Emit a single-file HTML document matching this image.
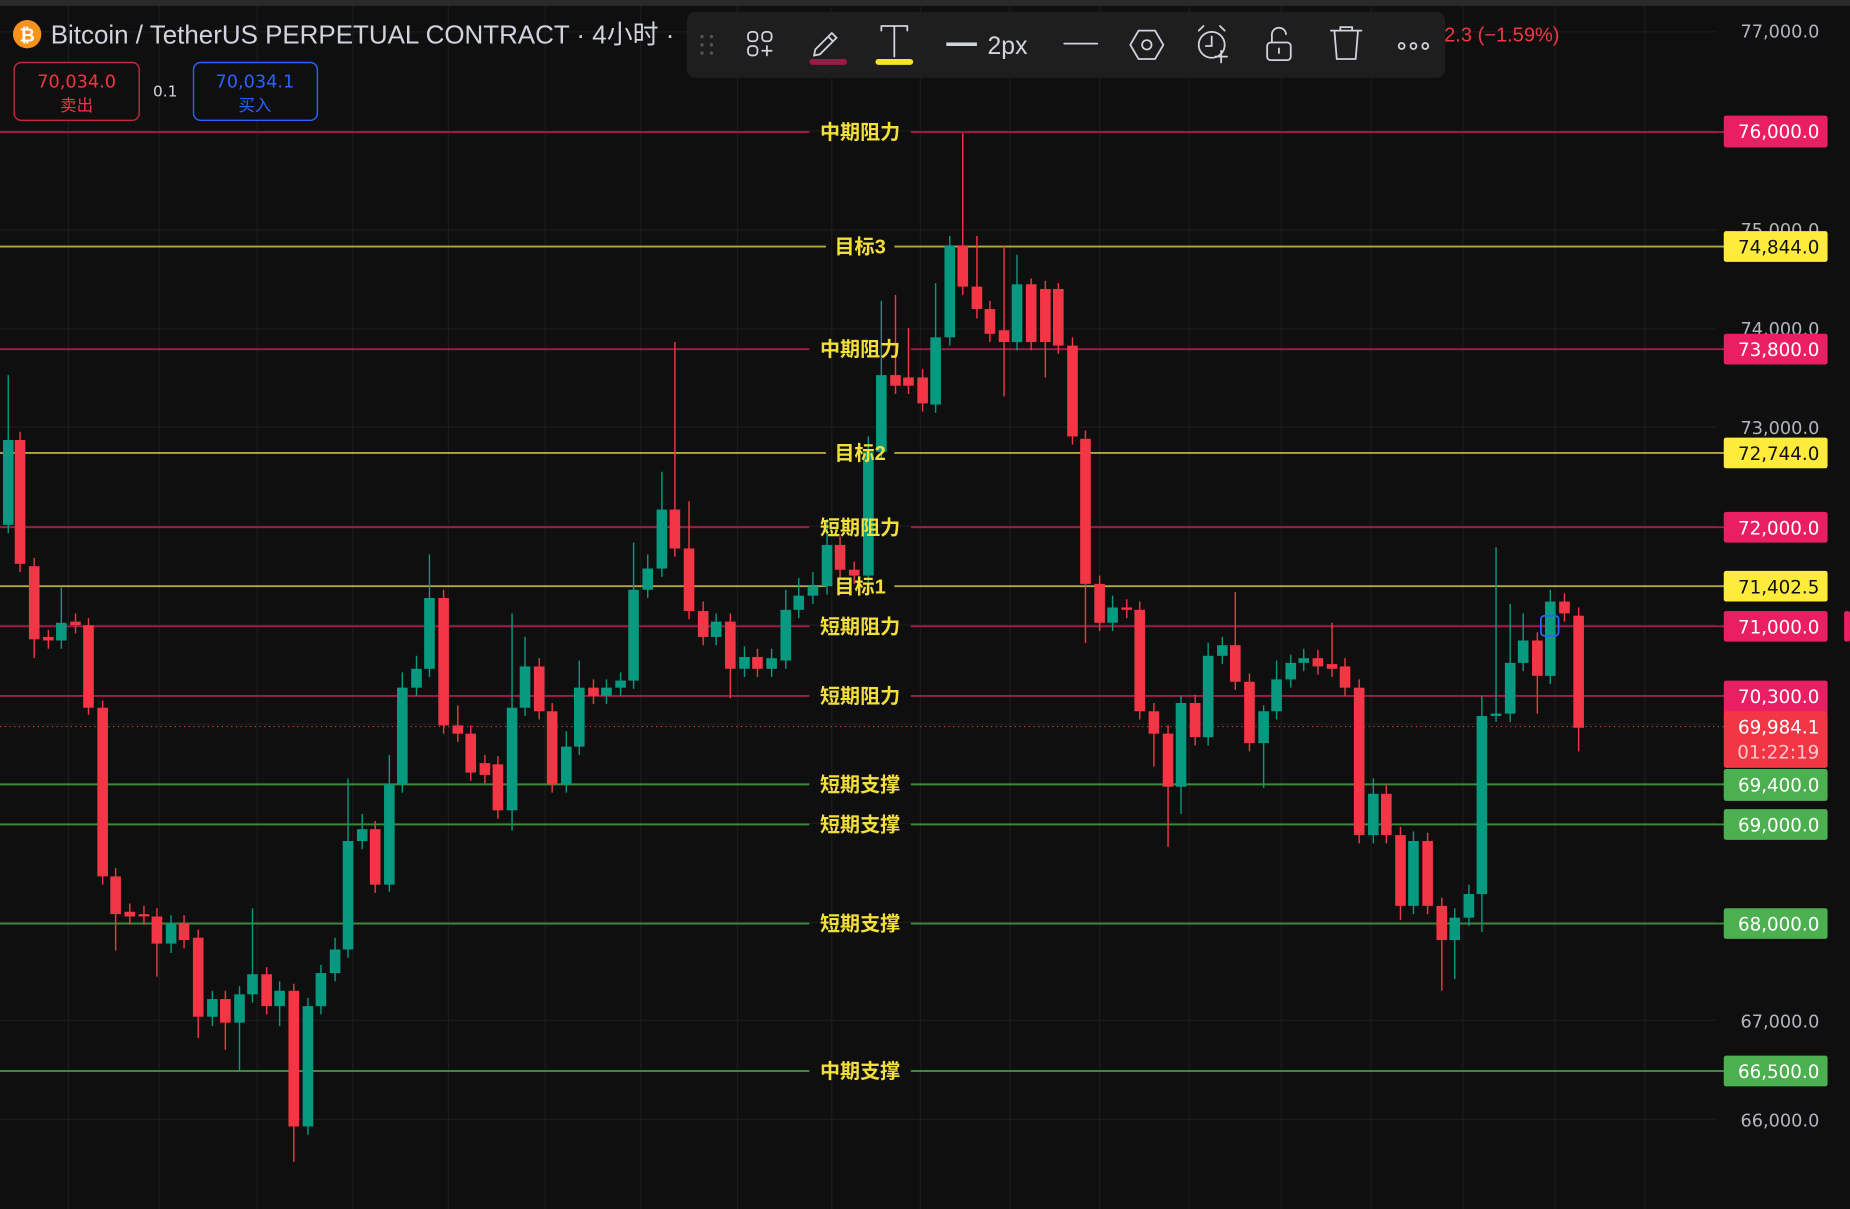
<!DOCTYPE html>
<html><head><meta charset="utf-8"><style>
html,body{margin:0;padding:0;background:#0f0f0f;overflow:hidden}
svg{display:block}
.cn{font-family:"Liberation Sans","Noto Sans CJK SC",sans-serif;font-weight:bold;font-size:17px;fill:#f2df3a}
.ax{font-family:"DejaVu Sans","Liberation Sans",sans-serif;font-size:15px;fill:#b2b5be}
.lb{font-family:"DejaVu Sans","Liberation Sans",sans-serif;font-size:15.5px}
</style></head><body>
<svg width="1850" height="1209" viewBox="0 0 1568 1025" preserveAspectRatio="none" xmlns="http://www.w3.org/2000/svg">
<rect width="1568" height="1025" fill="#0f0f0f"/>
<rect width="1568" height="5" fill="#2a2a2a"/>
<g stroke="#1c1c1c" stroke-width="1">
<path d="M58 5V1025M135 5V1025M218 5V1025M299 5V1025M380 5V1025M462 5V1025M543 5V1025M625 5V1025M705 5V1025M780 5V1025M856 5V1025M932 5V1025M1008 5V1025M1086 5V1025M1162 5V1025M1240 5V1025M1318 5V1025M1394 5V1025"/>
<path d="M0 27H1455M0 111H1455M0 195H1455M0 279H1455M0 362H1455M0 446H1455M0 530H1455M0 614H1455M0 698H1455M0 782H1455M0 865H1455M0 949H1455"/>
</g>
<!-- horizontal levels -->
<g stroke-width="1.6">
<path d="M0 112H686M772 112H1462" stroke="#a8194a"/>
<path d="M0 209H700M758 209H1462" stroke="#b5a83a"/>
<path d="M0 296H686M772 296H1462" stroke="#a8194a"/>
<path d="M0 384H700M758 384H1462" stroke="#b5a83a"/>
<path d="M0 447H686M772 447H1462" stroke="#a8194a"/>
<path d="M0 497H700M758 497H1462" stroke="#b5a83a"/>
<path d="M0 531H686M772 531H1462" stroke="#a8194a"/>
<path d="M0 590H686M772 590H1462" stroke="#a8194a"/>
<path d="M0 665H686M772 665H1462" stroke="#3d8a3d"/>
<path d="M0 699H686M772 699H1462" stroke="#3d8a3d"/>
<path d="M0 783H686M772 783H1462" stroke="#3d8a3d"/>
<path d="M0 908H686M772 908H1462" stroke="#3d8a3d"/>
</g>
<path d="M0 616H1462" stroke="#f23645" stroke-width="1" stroke-dasharray="1 3"/>
<!-- wicks -->
<g stroke-width="1.2">
<path stroke="#089981" d="M7 318V452M52 498V550M145 776V808M180 840V870M203 836V908M214 770V850M237 832V870M261 846V962M272 818V860M284 795V832M295 660V812M307 690V720M330 640V756M341 570V672M353 556V590M364 470V574M434 520V704M445 540V607M480 620V672M491 560V640M514 576V597M526 570V590M537 460V584M549 470V507M561 400V489M607 520V547M631 548V574M654 550V574M666 500V567M677 490V524M689 485V512M701 440V504M736 370V495M747 255V390M793 240V350M805 200V293M862 216V297M943 505V535M1001 590V690M1024 545V632M1036 540V563M1071 598V668M1082 560V610M1094 555V583M1105 550V569M1164 660V715M1198 705V775M1233 770V830M1245 750V785M1256 590V790M1268 464V612M1280 512V612M1291 520V569M1314 500V580"/>
<path stroke="#f23645" d="M17 366V485M29 473V558M41 534V550M64 520V537M75 524V606M87 594V750M98 736V806M110 766V784M122 768V784M133 770V828M156 776V804M168 788V880M191 840V890M226 820V860M249 834V985M318 696V757M376 500V622M388 598V629M399 615V662M411 640V664M422 641V694M457 558V610M468 596V672M503 576V597M572 290V472M584 425V525M596 510V547M619 520V592M642 550V574M712 455V490M724 476V495M759 250V334M770 278V334M782 313V349M816 113V250M828 200V270M839 255V290M851 208V336M874 236V297M886 238V320M897 240V300M909 286V377M920 365V545M932 488V535M955 508V524M966 510V610M978 596V650M990 615V718M1013 589V632M1047 502V585M1059 571V637M1117 551V572M1129 528V574M1140 558V590M1152 576V715M1175 666V715M1187 701V780M1210 706V775M1222 761V840M1303 536V605M1326 503V527M1338 515V637"/>
</g>
<!-- bodies green -->
<g fill="#089981">
<rect x="2.5" y="373" width="9" height="72"/><rect x="47.5" y="528" width="9" height="15"/><rect x="140.5" y="783" width="9" height="17"/><rect x="175.5" y="847" width="9" height="15"/><rect x="198.5" y="843" width="9" height="24"/><rect x="209.5" y="826" width="9" height="17"/><rect x="232.5" y="840" width="9" height="13"/><rect x="256.5" y="853" width="9" height="102"/><rect x="267.5" y="825" width="9" height="28"/><rect x="279.5" y="805" width="9" height="20"/><rect x="290.5" y="713" width="9" height="92"/><rect x="302.5" y="703" width="9" height="10"/><rect x="325.5" y="665" width="9" height="85"/><rect x="336.5" y="583" width="9" height="82"/><rect x="348.5" y="567" width="9" height="16"/><rect x="359.5" y="507" width="9" height="60"/><rect x="429.5" y="600" width="9" height="87"/><rect x="440.5" y="565" width="9" height="35"/><rect x="475.5" y="633" width="9" height="32"/><rect x="486.5" y="583" width="9" height="50"/><rect x="509.5" y="583" width="9" height="7"/><rect x="521.5" y="577" width="9" height="6"/><rect x="532.5" y="500" width="9" height="77"/><rect x="544.5" y="482" width="9" height="18"/><rect x="556.5" y="432" width="9" height="50"/><rect x="602.5" y="527" width="9" height="13"/><rect x="626.5" y="557" width="9" height="10"/><rect x="649.5" y="558" width="9" height="9"/><rect x="661.5" y="517" width="9" height="43"/><rect x="672.5" y="505" width="9" height="12"/><rect x="684.5" y="497" width="9" height="8"/><rect x="696.5" y="462" width="9" height="35"/><rect x="731.5" y="383" width="9" height="105"/><rect x="742.5" y="318" width="9" height="65"/><rect x="788.5" y="286" width="9" height="57"/><rect x="800.5" y="208" width="9" height="78"/><rect x="857.5" y="241" width="9" height="49"/><rect x="938.5" y="515" width="9" height="13"/><rect x="996.5" y="596" width="9" height="71"/><rect x="1019.5" y="556" width="9" height="69"/><rect x="1031.5" y="547" width="9" height="9"/><rect x="1066.5" y="603" width="9" height="27"/><rect x="1077.5" y="576" width="9" height="27"/><rect x="1089.5" y="562" width="9" height="14"/><rect x="1100.5" y="558" width="9" height="4"/><rect x="1159.5" y="673" width="9" height="35"/><rect x="1193.5" y="713" width="9" height="55"/><rect x="1228.5" y="778" width="9" height="19"/><rect x="1240.5" y="758" width="9" height="20"/><rect x="1251.5" y="607" width="9" height="151"/><rect x="1263.5" y="605" width="9" height="2"/><rect x="1275.5" y="562" width="9" height="43"/><rect x="1286.5" y="543" width="9" height="19"/><rect x="1309.5" y="510" width="9" height="63"/>
</g>
<g fill="#f23645">
<rect x="12.5" y="373" width="9" height="105"/><rect x="24.5" y="480" width="9" height="62"/><rect x="36.5" y="540" width="9" height="3"/><rect x="59.5" y="527" width="9" height="3"/><rect x="70.5" y="530" width="9" height="70"/><rect x="82.5" y="600" width="9" height="143"/><rect x="93.5" y="743" width="9" height="32"/><rect x="105.5" y="773" width="9" height="4"/><rect x="117.5" y="775" width="9" height="2"/><rect x="128.5" y="777" width="9" height="23"/><rect x="151.5" y="783" width="9" height="14"/><rect x="163.5" y="795" width="9" height="67"/><rect x="186.5" y="847" width="9" height="20"/><rect x="221.5" y="826" width="9" height="27"/><rect x="244.5" y="840" width="9" height="115"/><rect x="313.5" y="703" width="9" height="47"/><rect x="371.5" y="507" width="9" height="108"/><rect x="383.5" y="615" width="9" height="7"/><rect x="394.5" y="622" width="9" height="33"/><rect x="406.5" y="647" width="9" height="10"/><rect x="417.5" y="648" width="9" height="39"/><rect x="452.5" y="565" width="9" height="38"/><rect x="463.5" y="603" width="9" height="62"/><rect x="498.5" y="583" width="9" height="7"/><rect x="567.5" y="432" width="9" height="33"/><rect x="579.5" y="465" width="9" height="53"/><rect x="591.5" y="518" width="9" height="22"/><rect x="614.5" y="527" width="9" height="40"/><rect x="637.5" y="557" width="9" height="10"/><rect x="707.5" y="462" width="9" height="21"/><rect x="719.5" y="483" width="9" height="5"/><rect x="754.5" y="318" width="9" height="9"/><rect x="765.5" y="320" width="9" height="7"/><rect x="777.5" y="320" width="9" height="22"/><rect x="811.5" y="208" width="9" height="35"/><rect x="823.5" y="243" width="9" height="19"/><rect x="834.5" y="262" width="9" height="21"/><rect x="846.5" y="280" width="9" height="10"/><rect x="869.5" y="241" width="9" height="49"/><rect x="881.5" y="245" width="9" height="45"/><rect x="892.5" y="245" width="9" height="48"/><rect x="904.5" y="293" width="9" height="77"/><rect x="915.5" y="372" width="9" height="123"/><rect x="927.5" y="495" width="9" height="33"/><rect x="950.5" y="515" width="9" height="2"/><rect x="961.5" y="517" width="9" height="86"/><rect x="973.5" y="603" width="9" height="19"/><rect x="985.5" y="622" width="9" height="45"/><rect x="1008.5" y="596" width="9" height="29"/><rect x="1042.5" y="547" width="9" height="31"/><rect x="1054.5" y="578" width="9" height="52"/><rect x="1112.5" y="558" width="9" height="7"/><rect x="1124.5" y="563" width="9" height="4"/><rect x="1135.5" y="565" width="9" height="18"/><rect x="1147.5" y="583" width="9" height="125"/><rect x="1170.5" y="673" width="9" height="35"/><rect x="1182.5" y="708" width="9" height="60"/><rect x="1205.5" y="713" width="9" height="55"/><rect x="1217.5" y="768" width="9" height="29"/><rect x="1298.5" y="543" width="9" height="30"/><rect x="1321.5" y="510" width="9" height="10"/><rect x="1333.5" y="522" width="9" height="95"/>
</g>
<rect x="1306" y="522" width="15" height="17" rx="3" fill="none" stroke="#2962ff" stroke-width="1.5"/>
<!-- level labels -->
<g class="cn" text-anchor="middle">
<text x="729" y="118">中期阻力</text>
<text x="729" y="215">目标3</text>
<text x="729" y="302">中期阻力</text>
<text x="729" y="390">目标2</text>
<text x="729" y="453">短期阻力</text>
<text x="729" y="503">目标1</text>
<text x="729" y="537">短期阻力</text>
<text x="729" y="596">短期阻力</text>
<text x="729" y="671">短期支撑</text>
<text x="729" y="705">短期支撑</text>
<text x="729" y="789">短期支撑</text>
<text x="729" y="914">中期支撑</text>
</g>
<!-- axis -->
<g class="ax" text-anchor="end">
<text x="1542" y="32">77,000.0</text>
<text x="1542" y="200">75,000.0</text>
<text x="1542" y="284">74,000.0</text>
<text x="1542" y="368">73,000.0</text>
<text x="1542" y="871">67,000.0</text>
<text x="1542" y="955">66,000.0</text>
</g>
<g class="lb" text-anchor="end">
<rect x="1461" y="98" width="88" height="27" rx="2" fill="#e91e63"/><text x="1542" y="117" fill="#fff">76,000.0</text>
<rect x="1461" y="196" width="88" height="26" rx="2" fill="#ffeb3b"/><text x="1542" y="215" fill="#111">74,844.0</text>
<rect x="1461" y="283" width="88" height="26" rx="2" fill="#e91e63"/><text x="1542" y="302" fill="#fff">73,800.0</text>
<rect x="1461" y="371" width="88" height="26" rx="2" fill="#ffeb3b"/><text x="1542" y="390" fill="#111">72,744.0</text>
<rect x="1461" y="434" width="88" height="26" rx="2" fill="#e91e63"/><text x="1542" y="453" fill="#fff">72,000.0</text>
<rect x="1461" y="484" width="88" height="26" rx="2" fill="#ffeb3b"/><text x="1542" y="503" fill="#111">71,402.5</text>
<rect x="1461" y="518" width="88" height="26" rx="2" fill="#e91e63"/><text x="1542" y="537" fill="#fff">71,000.0</text>
<rect x="1563" y="518" width="5" height="26" rx="2" fill="#e91e63"/>
<rect x="1461" y="577" width="88" height="28" rx="2" fill="#e91e63"/><text x="1542" y="596" fill="#fff">70,300.0</text>
<rect x="1461" y="603" width="88" height="48" rx="2" fill="#f23645"/><text x="1542" y="622" fill="#fff">69,984.1</text><text x="1542" y="643" fill="#ffc8cc">01:22:19</text>
<rect x="1461" y="652" width="88" height="27" rx="2" fill="#4caf50"/><text x="1542" y="671" fill="#fff">69,400.0</text>
<rect x="1461" y="686" width="88" height="26" rx="2" fill="#4caf50"/><text x="1542" y="705" fill="#fff">69,000.0</text>
<rect x="1461" y="770" width="88" height="26" rx="2" fill="#4caf50"/><text x="1542" y="789" fill="#fff">68,000.0</text>
<rect x="1461" y="895" width="88" height="26" rx="2" fill="#4caf50"/><text x="1542" y="914" fill="#fff">66,500.0</text>
</g>
<!-- header -->
<circle cx="23" cy="29" r="12" fill="#f7931a"/>
<text x="23" y="35" text-anchor="middle" font-family="Liberation Sans" font-weight="bold" font-size="16" fill="#fff">₿</text>
<text x="43" y="37" font-family="Liberation Sans,Noto Sans CJK SC,sans-serif" font-size="22" fill="#d1d4dc">Bitcoin / TetherUS PERPETUAL CONTRACT · 4小时 ·</text>
<text x="1224" y="35" font-family="Liberation Sans,sans-serif" font-size="17" fill="#f23645">2.3 (−1.59%)</text>
<rect x="12" y="53" width="106" height="49" rx="6" fill="#0f0f0f" stroke="#c2293b" stroke-width="1.2"/>
<text x="65" y="74" text-anchor="middle" font-family="DejaVu Sans,sans-serif" font-size="15" fill="#f23645">70,034.0</text>
<text x="65" y="94" text-anchor="middle" font-family="Noto Sans CJK SC,sans-serif" font-size="14" fill="#f23645">卖出</text>
<text x="140" y="82" text-anchor="middle" font-family="DejaVu Sans,sans-serif" font-size="13" fill="#d1d4dc">0.1</text>
<rect x="164" y="53" width="105" height="49" rx="6" fill="#0f0f0f" stroke="#2962ff" stroke-width="1.2"/>
<text x="216" y="74" text-anchor="middle" font-family="DejaVu Sans,sans-serif" font-size="15" fill="#2962ff">70,034.1</text>
<text x="216" y="94" text-anchor="middle" font-family="Noto Sans CJK SC,sans-serif" font-size="14" fill="#2962ff">买入</text>
<!-- toolbar -->
<rect x="582" y="10" width="643" height="56" rx="8" fill="#1e1e1e"/>
<g fill="#555"><circle cx="595" cy="31" r="1.4"/><circle cx="603" cy="31" r="1.4"/><circle cx="595" cy="38" r="1.4"/><circle cx="603" cy="38" r="1.4"/><circle cx="595" cy="45" r="1.4"/><circle cx="603" cy="45" r="1.4"/></g>
<g fill="none" stroke="#d1d4dc" stroke-width="1.5" stroke-linecap="round">
<rect x="634" y="27" width="8" height="8" rx="3"/><rect x="646" y="27" width="8" height="8" rx="3"/><rect x="634" y="39" width="8" height="8" rx="3"/><path d="M646 43h8M650 39v8"/>
<path d="M691 42l14-14 4 4-14 14-5 1z M702 31l4 4"/>
<path d="M747 22h22M758 22v26M747 22v4M769 22v4"/>
<path d="M958 38l7-12h14l7 12-7 12h-14z"/><circle cx="972" cy="38" r="4"/>
<circle cx="1027" cy="38" r="11"/><path d="M1027 31v8h-5M1016 26l4-4M1038 26l-4-4M1035 43v10M1030 48h10"/>
<rect x="1074" y="36" width="20" height="15" rx="3"/><path d="M1078 36v-6a6 6 0 0 1 12 -1M1084 41v4"/>
<path d="M1128 26h26M1136 26v-3h10v3M1131 26l2 24h16l2-24"/>
<circle cx="1188" cy="39" r="2.5"/><circle cx="1198" cy="39" r="2.5"/><circle cx="1208" cy="39" r="2.5"/>
<path d="M902 37h28"/>
</g>
<rect x="686" y="50" width="32" height="5" rx="2.5" fill="#9c1944"/>
<rect x="742" y="50" width="32" height="5" rx="2.5" fill="#f5e625"/>
<rect x="802" y="36" width="26" height="3" fill="#d1d4dc"/>
<text x="837" y="46" font-family="Liberation Sans,sans-serif" font-size="21" fill="#d1d4dc">2px</text>
</svg>
</body></html>
